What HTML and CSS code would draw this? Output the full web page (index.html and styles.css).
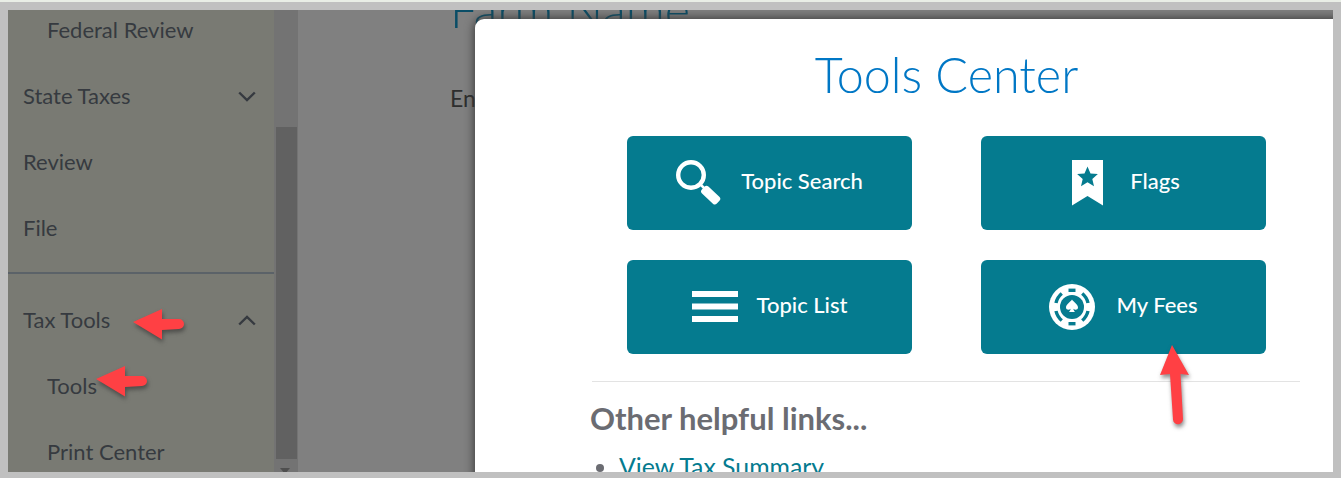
FILE: index.html
```html
<!DOCTYPE html>
<html lang="en">
<head>
<meta charset="utf-8">
<title>Tools Center</title>
<link rel="stylesheet" href="styles.css">
</head>
<body>
<div class="frame">
  <div class="app">
    <nav class="sidebar">
      <ul class="nav-list">
        <li class="nav-row sub">Federal Review</li>
        <li class="nav-row">State Taxes
          <svg class="chev" viewBox="0 0 18 11"><path d="M1.2 1.500 9 9l7.800-7.500"/></svg>
        </li>
        <li class="nav-row">Review</li>
        <li class="nav-row">File</li>
      </ul>
      <div class="nav-divider"></div>
      <ul class="nav-list">
        <li class="nav-row">Tax Tools
          <svg class="chev" viewBox="0 0 18 11"><path d="M1.2 9.500 9 2l7.800 7.500"/></svg>
        </li>
        <li class="nav-row sub">Tools</li>
        <li class="nav-row sub">Print Center</li>
      </ul>
    </nav>
    <div class="scrollbar">
      <div class="scroll-thumb"></div>
      <div class="scroll-arrow"></div>
    </div>
    <main class="main">
      <h1 class="page-title">Farm Name</h1>
      <p class="page-text">Enter the name of your farm</p>
    </main>

    <section class="modal">
      <h2 class="modal-title">Tools Center</h2>
      <div class="tool-grid">
        <a class="tool-btn">
          <svg class="icon icon-search" viewBox="0 0 46 46">
            <circle cx="15" cy="15" r="12.800" fill="none" stroke="#fff" stroke-width="4.400"/>
            <path d="M24 24l6 6" stroke="#fff" stroke-width="2.500"/>
            <rect x="24.500" y="30.400" width="20.500" height="9.400" rx="2.800" transform="rotate(43 34.700 35)" fill="#fff"/>
          </svg>
          <span>Topic Search</span>
        </a>
        <a class="tool-btn tool-flags">
          <svg class="icon icon-flag" viewBox="0 0 31 46">
            <path fill-rule="evenodd" fill="#fff" d="M0 0h31v45.500L15.500 36 0 45.500zM15.500 6.500l-3 6.900-7.400.6 5.600 4.900-1.700 7.300 6.500-3.900 6.500 3.900-1.700-7.300 5.600-4.900-7.400-.6z"/>
          </svg>
          <span>Flags</span>
        </a>
        <a class="tool-btn">
          <svg class="icon icon-list" viewBox="0 0 46 32">
            <path fill="#fff" d="M0 0h46v6H0zM0 12.500h46v6H0zM0 25h46v6H0z"/>
          </svg>
          <span>Topic List</span>
        </a>
        <a class="tool-btn tool-fees">
          <svg class="icon icon-chip" viewBox="0 0 46 46">
            <circle cx="23" cy="23" r="23" fill="#fff"/>
            <g fill="none" stroke="#057b8f" stroke-width="3.400">
              <path d="M19.500 6.300h7"/>
              <path d="M19.500 39.700h7"/>
              <path d="M33.200 9.500a17 17 0 0 1 5.800 9.500"/>
              <path d="M39 27a17 17 0 0 1-5.800 9.500"/>
              <path d="M12.800 9.500A17 17 0 0 0 7 19"/>
              <path d="M7 27a17 17 0 0 0 5.800 9.500"/>
            </g>
            <circle cx="23" cy="23" r="12" fill="#057b8f"/>
            <path fill="#fff" d="M23 15.500c1.500 2.500 6 4.700 6 8 0 2.300-2.900 3-4.600 1.300.2 1.500.7 2.400 1.600 3.200h-6c.9-.8 1.400-1.700 1.600-3.200-1.700 1.700-4.600 1-4.600-1.300 0-3.300 4.500-5.500 6-8z"/>
          </svg>
          <span>My Fees</span>
        </a>
      </div>
      <hr class="modal-rule">
      <h3 class="links-heading">Other helpful links...</h3>
      <ul class="links-list">
        <li><a>View Tax Summary</a></li>
      </ul>
    </section>

    <svg class="annot annot-a" viewBox="0 0 52 31"><path d="M0 13 29 0v10h17a5 5 0 0 1 0 10l-17 1v9.500z"/></svg>
    <svg class="annot annot-b" viewBox="0 0 52 31"><path d="M0 13 29 0v10h17a5 5 0 0 1 0 10l-17 1v9.500z"/></svg>
    <svg class="annot annot-c" viewBox="0 0 30 80"><path d="M13 0 30 30l-8.500-1 2.500 45a5 5 0 0 1-10 .5L11 29l-10 1z"/></svg>
  </div>
</div>
</body>
</html>
```

FILE: styles.css
```css
* { box-sizing: border-box; }
html, body { margin: 0; height: 100%; }
body {
  background: #c0c0c0;
  border-top: 2px solid #e9eee6;
  font-family: "Lato", "Liberation Sans", sans-serif;
  overflow: hidden;
}
.frame { height: 476px; padding: 8px 8px 6px 8px; }
.app {
  position: relative;
  display: flex;
  height: 462px;
  overflow: hidden;
  background: #808080;
}

.sidebar { width: 266px; flex: none; background: #797a73; color: #363a40; font-size: 22px; }
.nav-list { list-style: none; margin: 0; padding: 0; }
.nav-list:first-child { margin-top: -13px; }
.nav-row { position: relative; display: flex; align-items: center; height: 66px; padding: 0 0 2px 15px; }
.nav-row.sub { padding-left: 39px; }
.chev { position: absolute; left: 230px; top: 28px; width: 18px; height: 11px; fill: none; stroke: #363a40; stroke-width: 2.400; }
.nav-divider { height: 2px; margin: 11px 0 13px; background: #5b6268; }

.scrollbar { position: relative; width: 24px; flex: none; background: #737373; }
.scroll-thumb { position: absolute; left: 2px; top: 117px; width: 21px; height: 332px; background: #616161; }
.scroll-arrow {
  position: absolute; left: 6px; top: 458px;
  border: 5.500px solid transparent; border-top: 6px solid #4f4f4f;
}

.main { flex: 1; padding-left: 152px; color: #2e2e2e; }
.page-title { margin: -29px 0 0; font-size: 48.500px; font-weight: 300; line-height: 56px; color: #0a4d66; white-space: nowrap; }
.page-text { margin: 47px 0 0; font-size: 23px; line-height: 28px; font-weight: 400; white-space: nowrap; }

.modal {
  position: absolute;
  left: 467px; top: 9px;
  width: 943px; height: 520px;
  padding: 0 117px;
  background: #fff;
  border-radius: 9px;
  box-shadow: 0 0 10px 1px #3a3a3a;
}
.modal-title { margin: 24px 0 0; font-size: 48.500px; line-height: 62px; font-weight: 300; color: #0077c5; text-align: center; }
.tool-grid { display: grid; grid-template-columns: 285px 285px; grid-auto-rows: 94px; gap: 30px 69px; justify-content: center; margin-top: 31px; }
.tool-btn {
  display: flex; align-items: center; justify-content: center; gap: 19px;
  background: #057b8f; border-radius: 6px;
  color: #fff; font-size: 22px; font-weight: 500;
}
.tool-btn span { margin-bottom: 6px; }
.tool-btn.tool-flags { gap: 27px; padding-left: 5px; }
.tool-btn.tool-fees { gap: 21px; }
.icon { flex: none; display: block; }
.icon-search { width: 46px; height: 46px; }
.icon-flag { width: 31px; height: 46px; }
.icon-list { width: 46px; height: 32px; }
.icon-chip { width: 46px; height: 46px; }
.modal-rule { margin: 27px 1px 0 0; border: 0; border-top: 1px solid #e3e3e3; }
.links-heading { margin: 16px 0 0 -2px; font-size: 31px; line-height: 40px; font-weight: 700; color: #6b6c72; }
.links-list { margin: 14px 0 0; padding-left: 27px; color: #6b6c72; font-size: 24.800px; line-height: 30px; }
.links-list a { color: #057b8f; }

.annot { position: absolute; fill: #ff4044; filter: drop-shadow(1px 3px 2px rgba(40,40,40,.55)); overflow: visible; }
.annot-a { left: 125px; top: 299px; width: 52px; height: 31px; }
.annot-b { left: 88px; top: 356px; width: 52px; height: 31px; }
.annot-c { left: 1151px; top: 335px; width: 30px; height: 80px; }
```
